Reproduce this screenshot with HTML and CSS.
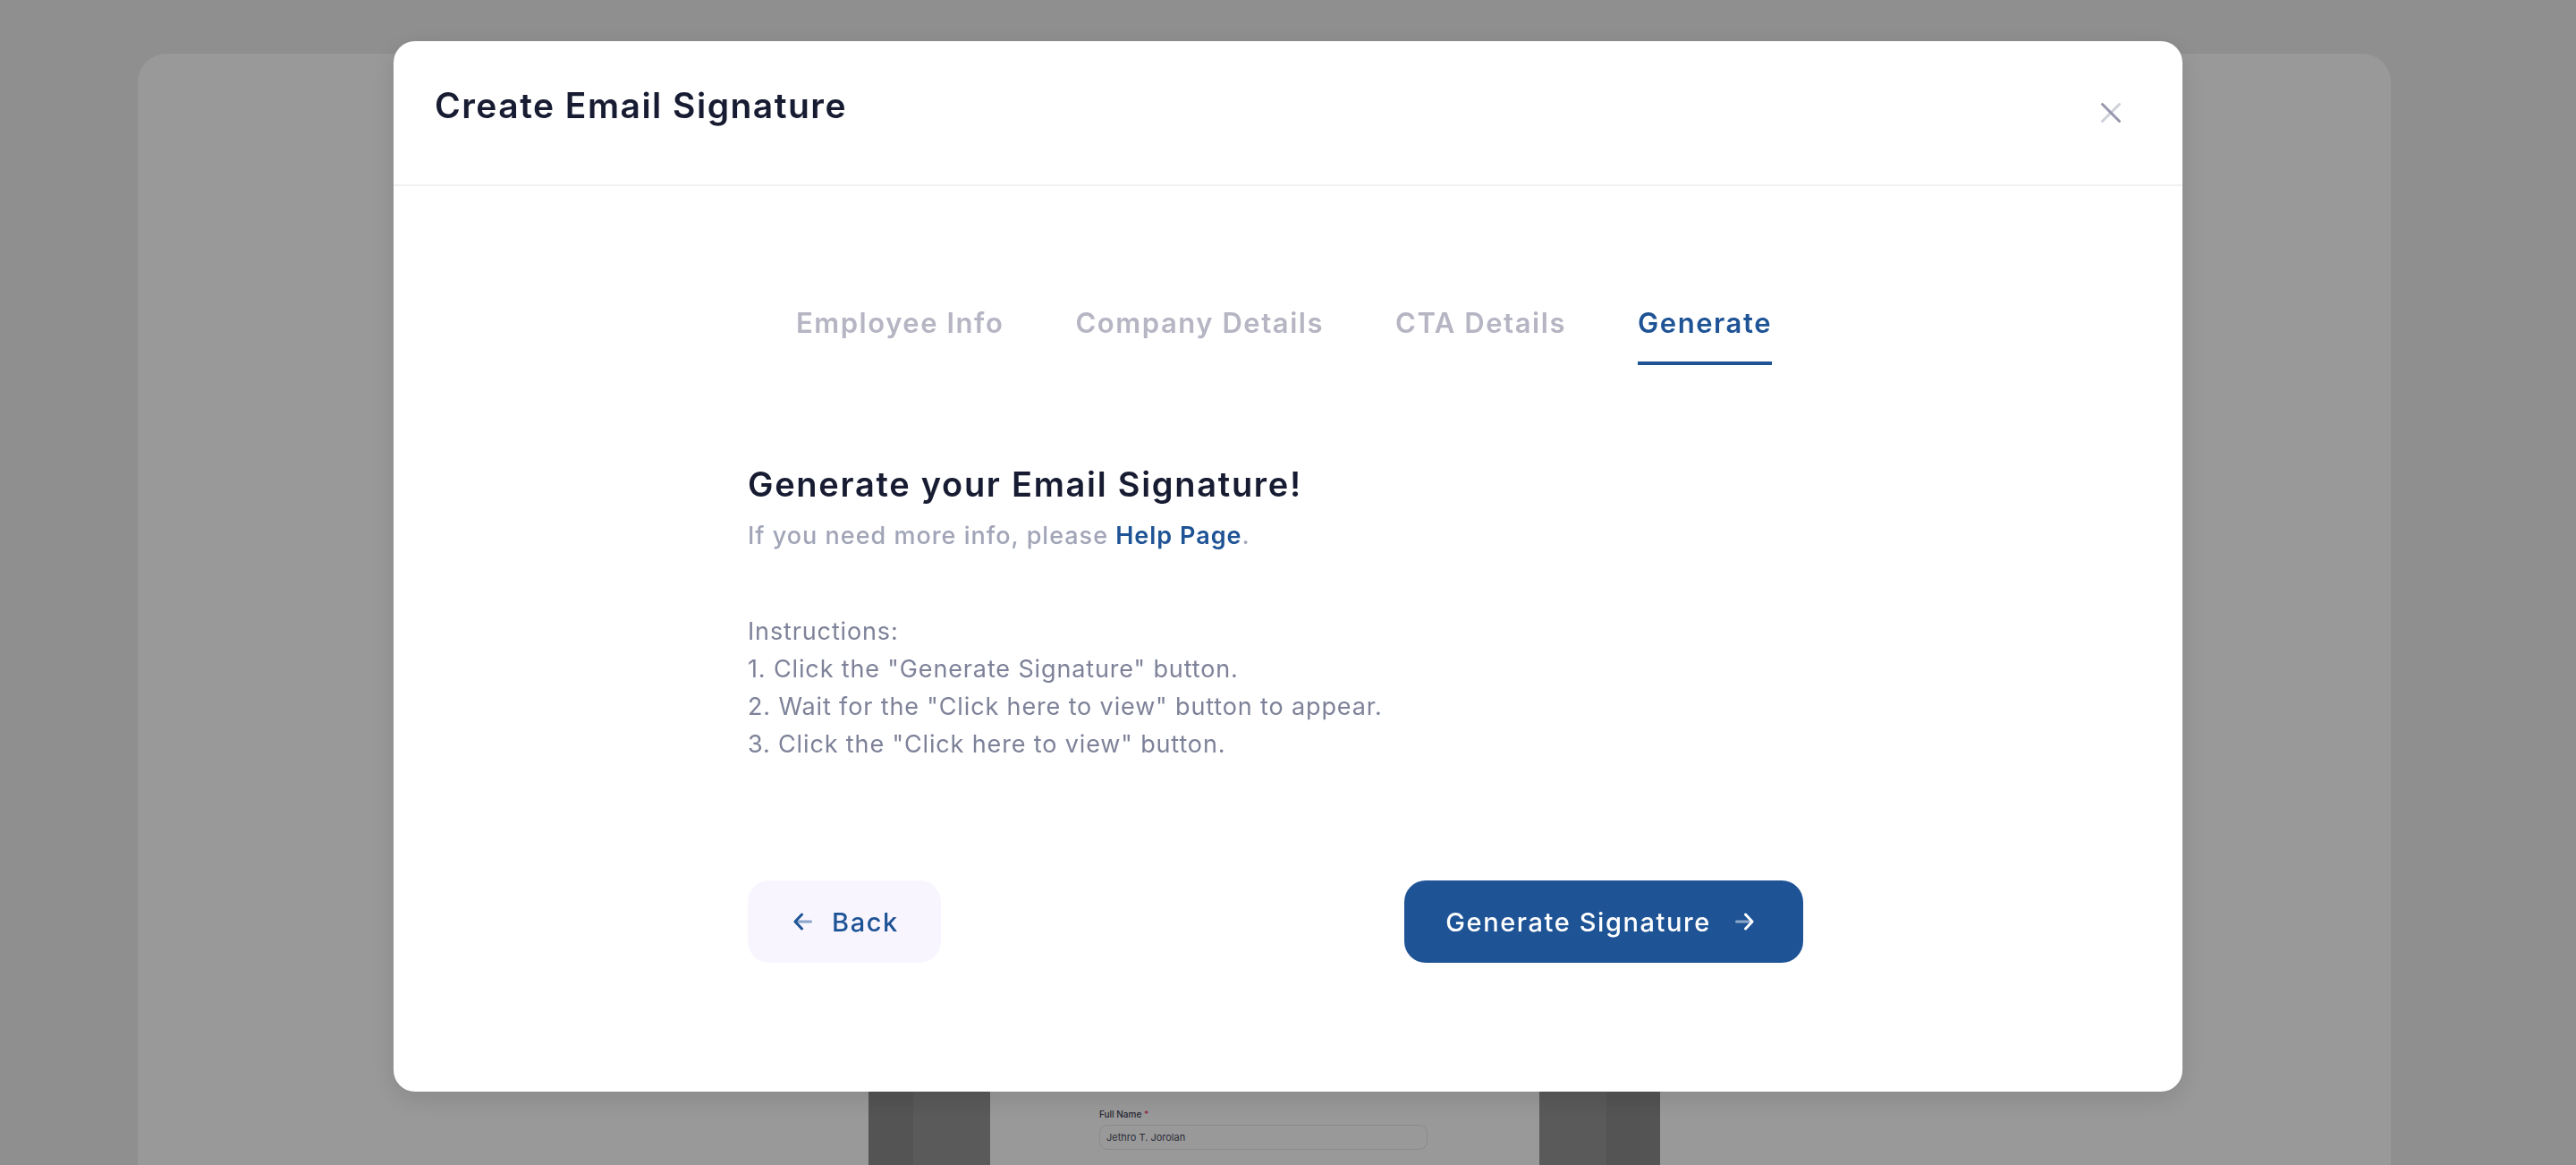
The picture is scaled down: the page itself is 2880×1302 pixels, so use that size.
FILE: index.html
```html
<!DOCTYPE html>
<html lang="en">
<head>
<meta charset="utf-8">
<title>Create Email Signature</title>
<link rel="stylesheet" href="styles.css">
</head>
<body>
  <div class="page">
    <div class="card">
      <div class="preview">
        <div class="shade shade-a"></div>
        <div class="shade shade-b"></div>
        <div class="form-area">
          <div class="field-label">Full Name <span class="req">*</span></div>
          <div class="field-input">Jethro T. Jorolan</div>
        </div>
        <div class="shade shade-b2"></div>
        <div class="shade shade-a2"></div>
      </div>
    </div>
  </div>

  <div class="overlay"></div>

  <div class="modal">
    <div class="modal-header">
      <h2 class="modal-title">Create Email Signature</h2>
      <button class="close-btn" aria-label="Close">
        <svg width="24" height="24" viewBox="0 0 24 24" fill="none">
          <line x1="2.5" y1="2.5" x2="21.5" y2="21.5" stroke="#9497ad" stroke-width="3" stroke-linecap="round"/>
          <line x1="21.5" y1="2.5" x2="2.5" y2="21.5" stroke="#9497ad" stroke-opacity="0.45" stroke-width="3" stroke-linecap="round"/>
        </svg>
      </button>
    </div>
    <div class="modal-body">
      <div class="tabs">
        <div class="tab">Employee Info</div>
        <div class="tab">Company Details</div>
        <div class="tab">CTA Details</div>
        <div class="tab active">Generate</div>
      </div>
      <div class="content">
        <h3 class="heading">Generate your Email Signature!</h3>
        <p class="sub">If you need more info, please <a class="link" href="#">Help Page</a>.</p>
        <div class="instructions">
          <div>Instructions:</div>
          <div>1. Click the "Generate Signature" button.</div>
          <div>2. Wait for the "Click here to view" button to appear.</div>
          <div>3. Click the "Click here to view" button.</div>
        </div>
        <div class="actions">
          <button class="btn btn-light">
            <svg width="21" height="20" viewBox="0 0 21 20" fill="none">
              <line x1="3" y1="10" x2="19.5" y2="10" stroke="#1e5395" stroke-opacity="0.5" stroke-width="3" stroke-linecap="round"/>
              <polyline points="9.5,2 2,10 9.5,18" stroke="#1e5395" stroke-width="3" stroke-linecap="round" stroke-linejoin="round"/>
            </svg>
            <span>Back</span>
          </button>
          <button class="btn btn-primary">
            <span>Generate Signature</span>
            <svg width="21" height="20" viewBox="0 0 21 20" fill="none">
              <line x1="1.5" y1="10" x2="18" y2="10" stroke="#ffffff" stroke-opacity="0.5" stroke-width="3" stroke-linecap="round"/>
              <polyline points="11.5,2 19,10 11.5,18" stroke="#ffffff" stroke-width="3" stroke-linecap="round" stroke-linejoin="round"/>
            </svg>
          </button>
        </div>
      </div>
    </div>
  </div>
</body>
</html>
```

FILE: styles.css
```css
* { box-sizing: border-box; }

html, body {
  margin: 0;
  padding: 0;
  height: 100%;
  overflow: hidden;
}

body {
  background: #eeeeee;
  font-family: "Inter", "Noto Sans", "Liberation Sans", sans-serif;
}

/* background page */
.page {
  padding: 60px 207px 0 154px;
}

.card {
  background: #ffffff;
  border-radius: 32px;
  min-height: 1500px;
  padding-top: 640px;
}

.preview {
  width: 885px;
  margin: 0 auto;
  display: flex;
  height: 900px;
}

.shade { height: 100%; }
.shade-a { width: 50px; background: #8c8c8c; }
.shade-b { width: 86px; background: #969696; }
.shade-b2 { width: 75px; background: #969696; }
.shade-a2 { width: 60px; background: #8c8c8c; }

.form-area {
  flex: 1;
  padding: 538px 125px 0 122px;
  background: #ffffff;
}

.field-label {
  font-size: 10px;
  line-height: 14px;
  font-weight: 500;
  color: #3f4254;
}

.req { color: #f1416c; }

.field-input {
  margin-top: 5px;
  height: 28px;
  border: 1px solid #e4e6ef;
  border-radius: 9px;
  padding-left: 7px;
  font-size: 11px;
  line-height: 26px;
  color: #4b4e62;
}

.overlay {
  position: fixed;
  inset: 0;
  background: rgba(0, 0, 0, 0.4);
}

/* modal */
.modal {
  position: fixed;
  left: 440px;
  top: 46px;
  width: 2000px;
  height: 1174px;
  background: #ffffff;
  border-radius: 24px;
  box-shadow: 0 8px 30px rgba(0, 0, 0, 0.12);
}

.modal-header {
  height: 162px;
  border-bottom: 2px solid #eff2f5;
  display: flex;
  align-items: center;
  justify-content: space-between;
  padding: 0 68px 0 46px;
}

.modal-title {
  margin: 0 0 16px;
  font-size: 39px;
  line-height: 48px;
  font-weight: 600;
  letter-spacing: 0.038em;
  color: #181c32;
}

.close-btn {
  border: 0;
  background: transparent;
  padding: 0;
  width: 24px;
  height: 24px;
  display: flex;
}

.modal-body {
  padding-top: 130px;
}

.tabs {
  display: flex;
  justify-content: center;
  gap: 80px;
  padding-right: 9px;
}

.tab {
  font-size: 31px;
  line-height: 46px;
  font-weight: 600;
  letter-spacing: 0.05em;
  color: #b5b5c3;
  padding-bottom: 20px;
  border-bottom: 4px solid transparent;
}

.tab.active {
  color: #1e5395;
  border-bottom-color: #1e5395;
}

.content {
  width: 1180px;
  margin-left: 396px;
}

.heading {
  margin: 107px 0 0;
  font-size: 38px;
  line-height: 52px;
  font-weight: 600;
  letter-spacing: 0.045em;
  color: #181c32;
}

.sub {
  margin: 12px 0 0;
  font-size: 27px;
  line-height: 40px;
  font-weight: 500;
  letter-spacing: 0.037em;
  color: #a1a5b7;
}

.link {
  color: #1e5395;
  font-weight: 600;
  text-decoration: none;
}

.instructions {
  margin-top: 66px;
  font-size: 27px;
  line-height: 42px;
  letter-spacing: 0.032em;
  color: #7e8299;
}

.actions {
  margin-top: 131px;
  display: flex;
  justify-content: space-between;
}

.btn {
  height: 92px;
  border: 0;
  border-radius: 24px;
  display: flex;
  align-items: center;
  font-family: inherit;
  font-size: 29px;
  font-weight: 500;
  letter-spacing: 0.055em;
}

.btn-light {
  background: #f8f5ff;
  color: #1e5395;
  padding: 0 47px 0 51px;
  gap: 22px;
}

.btn-primary {
  background: #1e5395;
  color: #ffffff;
  padding: 0 55px 0 46px;
  gap: 27px;
}
```
